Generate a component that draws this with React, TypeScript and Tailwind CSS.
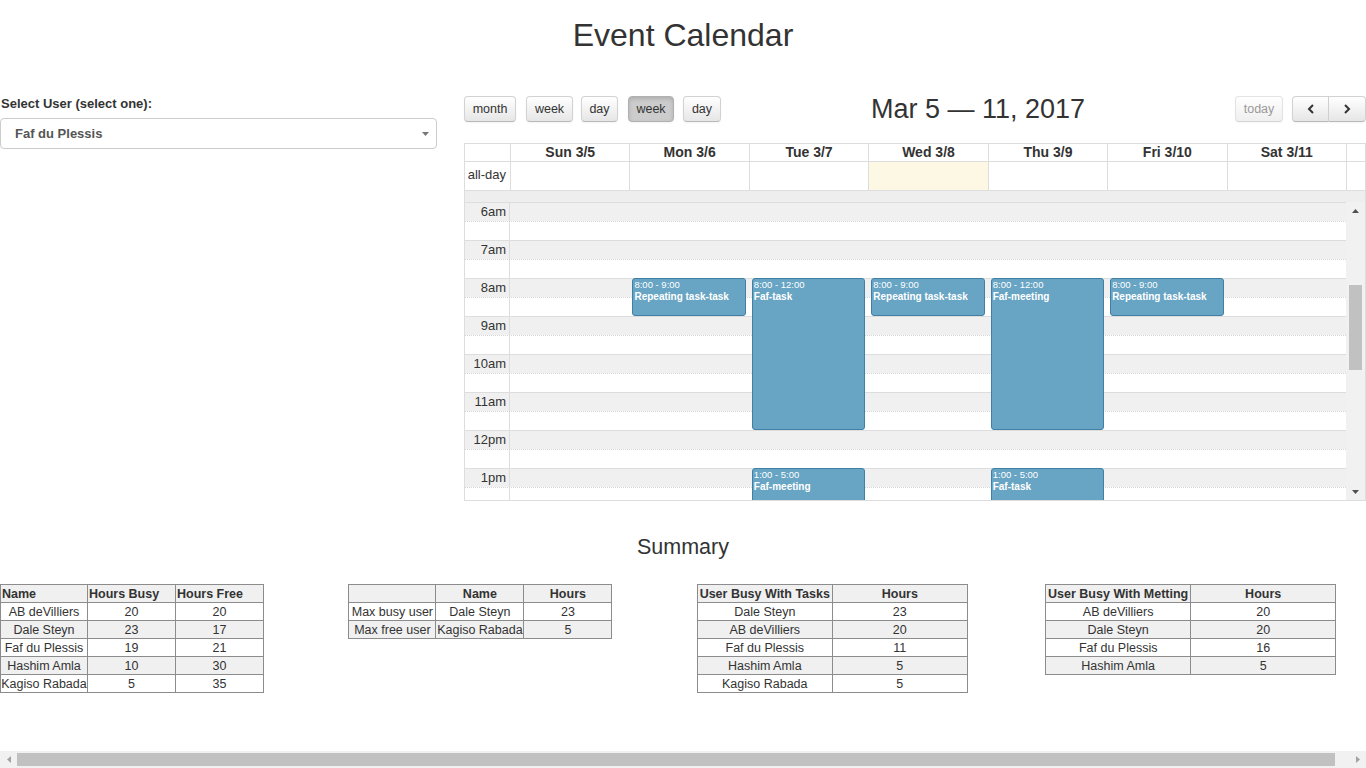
import React from 'react';

const days = ['Sun 3/5', 'Mon 3/6', 'Tue 3/7', 'Wed 3/8', 'Thu 3/9', 'Fri 3/10', 'Sat 3/11'];
const hours = ['6am', '7am', '8am', '9am', '10am', '11am', '12pm', '1pm'];
const HOUR = 38;

type Ev = { day: number; start: number; end: number; time: string; title: string };
const events: Ev[] = [
  { day: 1, start: 8, end: 9, time: '8:00 - 9:00', title: 'Repeating task-task' },
  { day: 2, start: 8, end: 12, time: '8:00 - 12:00', title: 'Faf-task' },
  { day: 3, start: 8, end: 9, time: '8:00 - 9:00', title: 'Repeating task-task' },
  { day: 4, start: 8, end: 12, time: '8:00 - 12:00', title: 'Faf-meeting' },
  { day: 5, start: 8, end: 9, time: '8:00 - 9:00', title: 'Repeating task-task' },
  { day: 2, start: 13, end: 17, time: '1:00 - 5:00', title: 'Faf-meeting' },
  { day: 4, start: 13, end: 17, time: '1:00 - 5:00', title: 'Faf-task' },
];

const btnBase =
  'h-[26px] flex items-center justify-center text-[12.5px] text-[#333] border border-[#d2d2d2] border-b-[#b8b8b8] rounded-[4px] bg-linear-to-b from-white to-[#e6e6e6] shadow-[inset_0_1px_0_rgba(255,255,255,0.2),0_1px_2px_rgba(0,0,0,0.05)]';
const btnActive =
  'h-[26px] flex items-center justify-center text-[12.5px] text-[#333] border border-[#b0b0b0] rounded-[4px] bg-[#cccccc] shadow-[inset_0_2px_4px_rgba(0,0,0,0.15),0_1px_2px_rgba(0,0,0,0.05)]';

function Chevron({ dir }: { dir: 'l' | 'r' }) {
  return (
    <svg width="8" height="10" viewBox="0 0 8 10">
      <polyline
        points={dir === 'l' ? '6,1 2,5 6,9' : '2,1 6,5 2,9'}
        fill="none"
        stroke="#333"
        strokeWidth="2"
      />
    </svg>
  );
}

function Tri({ dir, color }: { dir: 'u' | 'd' | 'l' | 'r'; color: string }) {
  const pts =
    dir === 'u' ? '0,4 7,4 3.5,0' : dir === 'd' ? '0,0 7,0 3.5,4' : dir === 'l' ? '4,0 4,7 0,3.5' : '0,0 0,7 4,3.5';
  const w = dir === 'u' || dir === 'd' ? 7 : 4;
  const h = dir === 'u' || dir === 'd' ? 4 : 7;
  return (
    <svg width={w} height={h} viewBox={`0 0 ${w} ${h}`}>
      <polygon points={pts} fill={color} />
    </svg>
  );
}

type TableProps = {
  widths: number[];
  head: string[];
  headLeft?: boolean;
  rows: (string | number)[][];
};

function SummaryTable({ widths, head, headLeft, rows }: TableProps) {
  const total = widths.reduce((a, b) => a + b, 0);
  return (
    <table className="border-collapse table-fixed text-[12.5px] text-[#333]" style={{ width: total }}>
      <colgroup>
        {widths.map((w, i) => (
          <col key={i} style={{ width: w }} />
        ))}
      </colgroup>
      <thead>
        <tr className="bg-[#f0f0f0]">
          {head.map((h, i) => (
            <th
              key={i}
              className={`border border-[#8c8c8c] h-[18px] leading-[16px] p-0 font-bold whitespace-nowrap ${
                headLeft ? 'text-left pl-[1px]' : 'text-center'
              }`}
            >
              {h}
            </th>
          ))}
        </tr>
      </thead>
      <tbody>
        {rows.map((r, ri) => (
          <tr key={ri} className={ri % 2 === 1 ? 'bg-[#f0f0f0]' : 'bg-white'}>
            {r.map((c, ci) => (
              <td
                key={ci}
                className="border border-[#8c8c8c] h-[18px] leading-[16px] p-0 text-center whitespace-nowrap"
              >
                {c}
              </td>
            ))}
          </tr>
        ))}
      </tbody>
    </table>
  );
}

export default function App() {
  return (
    <div className="w-[1366px] h-[768px] overflow-hidden flex flex-col bg-white text-[#333] font-['Liberation_Sans',Arial,sans-serif]">
      <div className="flex-1 min-h-0">
        <h1 className="mt-[18px] text-center text-[32px] leading-[35px] font-normal text-[#333]">Event Calendar</h1>

        <div className="flex mt-[43px]">
          {/* left column */}
          <div className="w-[437px] shrink-0">
            <div className="text-[13px] leading-[15px] font-bold text-[#333] pl-[1px]">Select User (select one):</div>
            <div className="mt-[7px] h-[31px] border border-[#cccccc] rounded-[4px] flex items-center justify-between pl-[14px] pr-[7px] bg-white">
              <span className="text-[13px] font-bold text-[#555]">Faf du Plessis</span>
              <Tri dir="d" color="#777" />
            </div>
          </div>

          {/* calendar */}
          <div className="ml-[27px] w-[902px] shrink-0">
            <div className="flex items-center h-[26px] mb-[21px]">
              <div className="flex items-center">
                <button className={`${btnBase} w-[52px]`}>month</button>
                <button className={`${btnBase} w-[47px] ml-[10px]`}>week</button>
                <button className={`${btnBase} w-[37px] ml-[8px]`}>day</button>
                <button className={`${btnActive} w-[46px] ml-[10px]`}>week</button>
                <button className={`${btnBase} w-[38px] ml-[9px]`}>day</button>
              </div>
              <div className="flex-1 text-center text-[27px] leading-[30px] text-[#333]">Mar 5 — 11, 2017</div>
              <div className="flex items-center">
                <button className={`${btnBase} w-[48px] opacity-60 text-[#555]`}>today</button>
                <div className="flex ml-[9px]">
                  <button className={`${btnBase} w-[37px] rounded-r-none`}>
                    <Chevron dir="l" />
                  </button>
                  <button className={`${btnBase} w-[37px] rounded-l-none border-l-0`}>
                    <Chevron dir="r" />
                  </button>
                </div>
              </div>
            </div>

            <div className="border border-[#dddddd]">
              {/* header */}
              <div className="grid grid-cols-[45px_repeat(7,minmax(0,1fr))_19px] h-[18px] border-b border-[#dddddd]">
                <div />
                {days.map((d) => (
                  <div key={d} className="border-l border-[#dddddd] text-center text-[14px] font-bold leading-[17px] text-[#333]">
                    {d}
                  </div>
                ))}
                <div className="border-l border-[#dddddd]" />
              </div>
              {/* all-day */}
              <div className="grid grid-cols-[45px_repeat(7,minmax(0,1fr))_19px] h-[29px] border-b border-[#dddddd]">
                <div className="text-right pr-[4px] pt-[5px] text-[13px] leading-[15px] text-[#333]">all-day</div>
                {days.map((d, i) => (
                  <div key={d} className={`border-l border-[#dddddd] ${i === 3 ? 'bg-[#fcf8e3]' : ''}`} />
                ))}
                <div className="border-l border-[#dddddd]" />
              </div>
              {/* divider */}
              <div className="h-[11px] bg-[#eeeeee]" />
              {/* time grid */}
              <div className="flex h-[298px] overflow-hidden">
                <div className="relative flex-1 min-w-0">
                  {hours.map((h) => (
                    <div key={h}>
                      <div className="flex h-[19px] border-t border-[#dddddd] bg-[#f0f0f0]">
                        <div className="w-[45px] shrink-0 border-r border-[#dddddd] text-right pr-[3px] text-[13px] leading-[17px] text-[#333]">
                          {h}
                        </div>
                      </div>
                      <div className="flex h-[19px] border-t border-dotted border-[#d5d5d5] bg-white">
                        <div className="w-[45px] shrink-0 border-r border-[#dddddd]" />
                      </div>
                    </div>
                  ))}
                  <div className="absolute inset-0 grid grid-cols-[45px_repeat(7,minmax(0,1fr))]">
                    <div />
                    {days.map((d, di) => (
                      <div key={d} className="relative">
                        {events
                          .filter((e) => e.day === di)
                          .map((e, k) => (
                            <div
                              key={k}
                              className="absolute left-[3px] right-[3px] bg-[#68a4c3] border border-[#3f80a4] rounded-[3px] text-white px-[1px] overflow-hidden"
                              style={{ top: (e.start - 6) * HOUR, height: (e.end - e.start) * HOUR }}
                            >
                              <div className="text-[9.5px] leading-[11px]">{e.time}</div>
                              <div className="text-[10px] leading-[13px] font-bold whitespace-nowrap">{e.title}</div>
                            </div>
                          ))}
                      </div>
                    ))}
                  </div>
                </div>
                {/* fake scrollbar */}
                <div className="w-[19px] shrink-0 bg-[#f1f1f1] flex flex-col">
                  <div className="h-[17px] flex items-center justify-center">
                    <Tri dir="u" color="#505050" />
                  </div>
                  <div className="flex-1">
                    <div className="mt-[66px] mx-[3px] h-[85px] bg-[#c1c1c1]" />
                  </div>
                  <div className="h-[17px] flex items-center justify-center">
                    <Tri dir="d" color="#505050" />
                  </div>
                </div>
              </div>
            </div>
          </div>
        </div>

        <h3 className="mt-[34px] text-center text-[21.5px] leading-[24px] font-normal text-[#333]">Summary</h3>

        <div className="flex mt-[25px]">
          <div className="w-[348.4px] shrink-0">
            <SummaryTable
              widths={[87, 88, 88]}
              head={['Name', 'Hours Busy', 'Hours Free']}
              headLeft
              rows={[
                ['AB deVilliers', 20, 20],
                ['Dale Steyn', 23, 17],
                ['Faf du Plessis', 19, 21],
                ['Hashim Amla', 10, 30],
                ['Kagiso Rabada', 5, 35],
              ]}
            />
          </div>
          <div className="w-[348.4px] shrink-0">
            <SummaryTable
              widths={[87, 88, 88]}
              head={['', 'Name', 'Hours']}
              rows={[
                ['Max busy user', 'Dale Steyn', 23],
                ['Max free user', 'Kagiso Rabada', 5],
              ]}
            />
          </div>
          <div className="w-[348.4px] shrink-0">
            <SummaryTable
              widths={[135, 135]}
              head={['User Busy With Tasks', 'Hours']}
              rows={[
                ['Dale Steyn', 23],
                ['AB deVilliers', 20],
                ['Faf du Plessis', 11],
                ['Hashim Amla', 5],
                ['Kagiso Rabada', 5],
              ]}
            />
          </div>
          <div className="w-[348.4px] shrink-0">
            <SummaryTable
              widths={[145, 145]}
              head={['User Busy With Metting', 'Hours']}
              rows={[
                ['AB deVilliers', 20],
                ['Dale Steyn', 20],
                ['Faf du Plessis', 16],
                ['Hashim Amla', 5],
              ]}
            />
          </div>
        </div>
      </div>

      {/* page horizontal scrollbar */}
      <div className="h-[17px] shrink-0 bg-[#f1f1f1] flex items-center">
        <div className="w-[17px] h-[17px] flex items-center justify-center">
          <Tri dir="l" color="#a3a3a3" />
        </div>
        <div className="flex-1 h-[17px] flex items-center">
          <div className="w-[1318px] h-[13px] bg-[#c1c1c1]" />
        </div>
        <div className="w-[17px] h-[17px] flex items-center justify-center">
          <Tri dir="r" color="#a3a3a3" />
        </div>
      </div>
    </div>
  );
}
